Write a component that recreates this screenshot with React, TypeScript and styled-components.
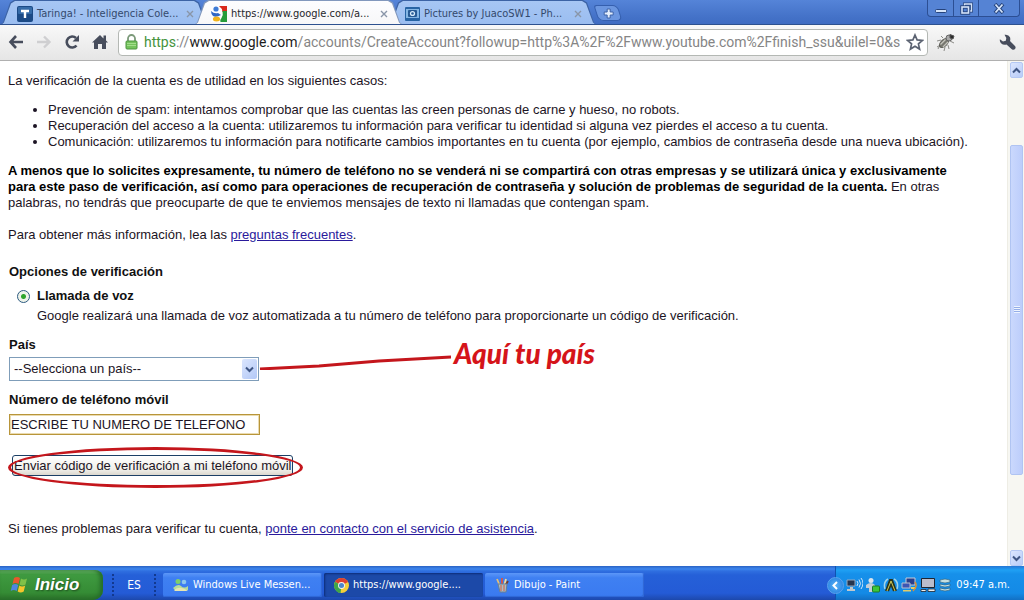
import React from 'react';
import styled, { createGlobalStyle, css } from 'styled-components';

const GlobalStyle = createGlobalStyle`
  * { box-sizing: border-box; }
  html, body { margin: 0; padding: 0; }
  body { font-family: "Liberation Sans", Arial, sans-serif; font-size: 13px; line-height: 16px; color: #1c1424; background: #fff; }
  button, input, select { font: inherit; color: inherit; margin: 0; }
`;

const uiFont = css`font-family: "DejaVu Sans Condensed", Tahoma, sans-serif;`;

const Screen = styled.div`
  display: flex;
  flex-direction: column;
  min-height: 100vh;
`;

/* ---------- Tab strip ---------- */
const TabStrip = styled.header`
  display: flex;
  justify-content: space-between;
  height: 25px;
  background: linear-gradient(#5584d8, #4472c8 70%, #3f6cc2);
  border-bottom: 1px solid #2d518f;
  overflow: hidden;
`;

const Tabs = styled.nav`
  display: flex;
  flex: 1;
  align-items: flex-start;
  min-width: 0;
`;

const Tab = styled.div<{ $active?: boolean }>`
  position: relative;
  z-index: ${p => (p.$active ? 2 : 1)};
  display: flex;
  align-items: center;
  flex: 0 1 209px;
  height: 25px;
  margin-right: -15px;
  padding: 2px 15px 0 17px;
  gap: 4px;
  ${uiFont}
  font-size: 11px;
  color: ${p => (p.$active ? '#26262a' : '#33496c')};
  &::before, &::after {
    content: "";
    position: absolute;
    z-index: -1;
    inset: 0;
    clip-path: polygon(0 100%, 3px 90%, 10px 10%, 14px 0, calc(100% - 14px) 0, calc(100% - 10px) 10%, calc(100% - 3px) 90%, 100% 100%);
    background: ${p => (p.$active ? '#8298bd' : '#3c63a5')};
  }
  &::after {
    inset: 1px 1px 0;
    background: ${p => (p.$active ? 'linear-gradient(#fdfdff, #f7f7f8)' : 'linear-gradient(#a6c6f4, #9abdf0)')};
  }
`;

const TabTitle = styled.a`
  flex: 1;
  min-width: 0;
  color: inherit;
  text-decoration: none;
  white-space: nowrap;
`;

const PlainButton = styled.button`
  display: flex;
  align-items: center;
  justify-content: center;
  padding: 0;
  border: 0;
  background: none;
`;

const NewTab = styled(PlainButton)`
  width: 24px;
  height: 16px;
  margin: 5px 0 0 14px;
  border: 1px solid #355fae;
  border-radius: 3px 5px 5px 5px;
  background: #6b96e0;
  transform: skewX(18deg);
  svg { transform: skewX(-18deg); }
`;

const WindowButtons = styled.div`
  display: flex;
  height: 17px;
  margin-right: 4px;
  border: 1px solid #2c4f94;
  border-top: 0;
  border-radius: 0 0 4px 4px;
  background: #5583d4;
`;

const WindowButton = styled(PlainButton)<{ $wide?: boolean }>`
  width: ${p => (p.$wide ? 41 : 25)}px;
  & + & { border-left: 1px solid #2c4f94; }
`;

/* ---------- Toolbar ---------- */
const Toolbar = styled.div`
  display: flex;
  align-items: center;
  height: 36px;
  padding: 0 8px 1px;
  background: linear-gradient(#f8f8f8, #e6e6e6);
  border-bottom: 1px solid #b0b0b0;
`;

const NavButtons = styled.div`
  display: flex;
  gap: 12px;
  margin-right: 10px;
`;

const NavButton = styled(PlainButton)`
  width: 16px;
  height: 16px;
`;

const AddressBar = styled.div`
  display: flex;
  align-items: center;
  flex: 1;
  min-width: 0;
  height: 27px;
  padding: 0 3px 0 6px;
  border: 1px solid #b4b8b4;
  border-radius: 4px;
  background: #fff;
`;

const Address = styled.a`
  flex: 1;
  min-width: 0;
  margin-left: 6px;
  overflow: hidden;
  white-space: nowrap;
  font-family: Roboto, Tahoma, sans-serif;
  font-size: 14px;
  line-height: 22px;
  color: #858585;
  text-decoration: none;
  span { color: #45933c; }
  b { font-weight: 400; color: #1c1c1c; }
`;

const Extensions = styled.div`
  display: flex;
  align-items: center;
  justify-content: space-between;
  width: 88px;
  padding: 0 0 0 8px;
`;

/* ---------- Page ---------- */
const Viewport = styled.div`
  display: flex;
  flex: 1;
`;

const Page = styled.main`
  flex: 1;
  min-width: 0;
  padding: 12px 32px 8px 8px;
`;

const Paragraph = styled.p`
  margin: 0 0 16px;
`;

const Cases = styled.ul`
  margin: -3px 0 13px;
  padding-left: 40px;
`;

const Strong = styled.b`
  color: #000;
`;

const Link = styled.a`
  color: #2a1a9c;
`;

const Form = styled.form`
  display: flex;
  flex-direction: column;
  align-items: flex-start;
  margin-top: 21px;
  padding-left: 1px;
`;

const Title = styled.h2`
  margin: 0 0 8px;
  font-size: 13px;
  line-height: 16px;
  color: #111;
`;

const Option = styled.div`
  display: grid;
  grid-template-columns: 12px 1fr;
  column-gap: 8px;
  row-gap: 4px;
  align-items: center;
  margin: 0 0 13px 8px;
  p { grid-column: 2; margin: 0; }
`;

const Radio = styled.input`
  appearance: none;
  width: 13px;
  height: 13px;
  border: 1px solid #2c5a80;
  border-radius: 50%;
  background: radial-gradient(circle, #2fa52c 0 2px, #eef3ea 3px);
`;

const Label = styled.label`
  font-weight: bold;
  color: #111;
`;

const SelectRow = styled.div`
  position: relative;
  width: 250px;
  margin: 4px 0 11px;
`;

const Select = styled.select`
  display: block;
  appearance: none;
  width: 100%;
  height: 24px;
  padding: 0 20px 0 4px;
  border: 1px solid #7f9db9;
  border-radius: 0;
  background: #fff;
`;

const SelectArrow = styled.span`
  position: absolute;
  top: 2px;
  right: 2px;
  bottom: 2px;
  width: 15px;
  display: flex;
  align-items: center;
  justify-content: center;
  border-radius: 2px;
  background: linear-gradient(135deg, #dbe6fe, #b3c8f6);
  pointer-events: none;
`;

const Note = styled.div`
  position: absolute;
  left: 100%;
  bottom: 11px;
  display: flex;
  align-items: flex-end;
  gap: 2px;
  font: italic 900 28px/34px Lato, sans-serif;
  color: #d5141a;
  white-space: nowrap;
  pointer-events: none;
`;

const Field = styled.input`
  width: 251px;
  height: 21px;
  margin: 6px 0 20px;
  padding: 0 1px;
  border: 1px solid #b8953a;
  outline: 0;
  box-shadow: inset 0 0 0 1px #eadbb0;
`;

const SubmitRow = styled.div`
  position: relative;
  margin: 0 0 45px 3px;
`;

const Submit = styled.button`
  display: block;
  height: 21px;
  padding: 0 1px;
  border: 1px solid #1c3f66;
  border-radius: 3px;
  background: linear-gradient(#fff, #f0efea 70%, #dcd8cf);
  white-space: nowrap;
`;

const Ring = styled.span`
  position: absolute;
  inset: -8px -10px -12px -4px;
  border: 3px solid #c4161c;
  border-radius: 50%;
  pointer-events: none;
`;

/* ---------- Scroll bar ---------- */
const ScrollBar = styled.div`
  display: flex;
  flex-direction: column;
  width: 17px;
  padding: 1px 1px 0 2px;
  border-left: 1px solid #eeede5;
  background: #f7f7f2;
`;

const ScrollButton = styled(PlainButton)`
  height: 16px;
  border: 1px solid #b4c8f4;
  border-radius: 2px;
  background: linear-gradient(135deg, #dbe6fe, #b8ccf8);
`;

const Track = styled.div`
  display: grid;
  flex: 1;
  grid-template-rows: 67fr 329fr 75fr;
`;

const Thumb = styled.div`
  grid-row: 2;
  display: flex;
  align-items: center;
  justify-content: center;
  border: 1px solid #b0c4f2;
  border-radius: 2px;
  background: linear-gradient(90deg, #cad8fd, #bccdfb);
`;

/* ---------- Task bar ---------- */
const TaskBar = styled.footer`
  display: flex;
  height: 34px;
  ${uiFont}
  font-size: 11px;
  color: #fff;
  background: linear-gradient(#2a62c4 0, #3d86ee 3px, #2f6fe0 5px, #2560d8 9px, #245bd6 80%, #1d48ac);
`;

const Start = styled.button`
  display: flex;
  align-items: center;
  gap: 5px;
  width: 103px;
  margin-top: 4px;
  padding: 0 0 0 10px;
  border: 0;
  border-radius: 0 8px 10px 0;
  background: linear-gradient(#6cb56a, #3f9a40 15%, #358c35 75%, #2a7029);
  box-shadow: inset -3px 0 4px #256c28;
  font: italic bold 17px/20px "Liberation Sans", Arial, sans-serif;
  color: #fff;
  text-shadow: 1px 1px 2px #1d4a1d;
`;

const Language = styled.div`
  display: flex;
  align-items: center;
  justify-content: center;
  width: 44px;
  margin: 8px 0 4px 9px;
  border: dotted #12398f;
  border-width: 0 2px;
  font-size: 12px;
`;

const Tasks = styled.div`
  display: flex;
  flex: 1;
  gap: 2px;
  padding: 7px 0 3px 7px;
  min-width: 0;
`;

const Task = styled.button<{ $active?: boolean }>`
  display: flex;
  align-items: center;
  gap: 4px;
  flex: 0 1 159px;
  min-width: 0;
  padding: 0 10px;
  border: 0;
  border-radius: 2px;
  white-space: nowrap;
  color: #fff;
  background: ${p => (p.$active ? '#1c49a8' : 'linear-gradient(#5c97f8, #3f80f2 20%, #3a7af0)')};
  box-shadow: ${p => (p.$active ? 'inset 1px 1px 2px #0d2c78' : 'inset -1px -1px 1px #2f66d4')};
`;

const Tray = styled.div`
  display: flex;
  align-items: center;
  gap: 2px;
  width: 189px;
  padding: 4px 14px 0 0;
  border-left: 1px solid #0f52b0;
  background: linear-gradient(#2577d6 0, #1fa0f4 4px, #1690ea 8px, #148ae6 80%, #1270c4);
  time { margin-left: auto; }
`;

const Expand = styled(PlainButton)`
  flex: none;
  width: 17px;
  height: 17px;
  margin-left: -9px;
  border-radius: 50%;
  background: radial-gradient(#58b4f8, #2078dc);
  border: 1px solid #5aa4ee;
`;

const Chevron = ({ d, color = '#3f5684' }: { d: string; color?: string }) => (
  <svg width="9" height="9" viewBox="0 0 9 9" fill="none" stroke={color} strokeWidth="2"><path d={d} /></svg>
);
const DOWN = 'M1 2.5 4.5 6 8 2.5';
const UP = 'M1 6.5 4.5 3 8 6.5';
const LEFT = 'M6 1 2.5 4.5 6 8';

const CloseX = () => (
  <svg width="8" height="8" viewBox="0 0 8 8" stroke="#8995a8" strokeWidth="1.4"><path d="M1 1l6 6M7 1L1 7" /></svg>
);

const TaringaIcon = () => (
  <svg width="16" height="16" viewBox="0 0 16 16">
    <rect width="16" height="16" rx="2" fill="#1b4a86" /><rect x="1" y="1" width="14" height="7" rx="1" fill="#356ba8" />
    <path d="M4 5h8M8 5v7" stroke="#fff" strokeWidth="2.4" />
  </svg>
);
const GoogleIcon = () => (
  <svg width="16" height="16" viewBox="0 0 16 16">
    <rect width="16" height="16" fill="#fdfdfd" />
    <path d="M8 0h8v6h-4.500Q11 2 8 0z" fill="#d9281c" /><path d="M11.500 5H16v11H9.500q-1-2 1-4 2-3 1-7z" fill="#259b3a" />
    <path d="M0 5q3 3 7 2l3 2q-5 3-8 1-2-2-2-5z" fill="#2f66c4" /><circle cx="5" cy="3" r="2.6" fill="#3f7bd6" />
    <ellipse cx="5.500" cy="13" rx="3.600" ry="2.500" fill="#f0b31c" />
  </svg>
);
const PhotoIcon = () => (
  <svg width="15" height="14" viewBox="0 0 15 14">
    <rect width="15" height="14" rx="1" fill="#2764a4" /><rect x="1" y="2" width="13" height="9" fill="#84b6e4" />
    <rect x="3" y="3" width="9" height="7" rx="1" fill="#265a94" /><circle cx="7.5" cy="6.5" r="2.6" fill="#d7ebfa" /><circle cx="7.5" cy="6.5" r="1.3" fill="#2b5f98" />
  </svg>
);
const LockIcon = () => (
  <svg width="13" height="16" viewBox="0 0 13 16">
    <path d="M3 8V4.5a3.5 3.5 0 0 1 7 0V8" fill="none" stroke="#7c9a7a" strokeWidth="1.8" />
    <rect x="1" y="7" width="11" height="8" rx="1" fill="#74c35c" stroke="#4d9540" /><path d="M2 9.500h9M2 11.500h9" stroke="#a3dd8c" />
  </svg>
);
const BugIcon = () => (
  <svg width="20" height="20" viewBox="0 0 20 20" fill="none" stroke="#8a8a86" strokeWidth="1">
    <path d="M5 8 1 9M7 6 5 4M12 13l1 4M9 15l-1 4M6 12l-5 3M14 9l4 2M4 13l-2 4" />
    <ellipse cx="8" cy="11" rx="5.500" ry="3.200" transform="rotate(-45 8 11)" fill="#77776f" stroke="#55554f" />
    <path d="M4.500 12.500l5-5M7 15l5-5" stroke="#c4c4bc" strokeWidth="1.300" /><circle cx="13" cy="6" r="3" fill="#aaa" stroke="#666" />
    <path d="M14 2.500l4 1.500-1 3-3-1z" fill="#2c2c2c" stroke="#555" />
  </svg>
);
const WrenchIcon = () => (
  <svg width="17" height="17" viewBox="0 0 17 17">
    <path d="M5.500.8q4-.8 5.500 2.500.6 1.800 0 3.700l5 5q1.200 1.500 0 3t-3.200.2L7.500 10.500Q4.500 11.500 2 9.300.4 7.500.9 5.200L4 7.600l2.800-.8.500-2.900z" fill="#474d5c" />
  </svg>
);
const FlagIcon = () => (
  <svg width="20" height="18" viewBox="0 0 20 18">
    <path d="M4 2q3-2 6 0L8.500 8q-3-2-6 0z" fill="#e8582c" /><path d="M11 2.500q3 2 6 0L15.500 8.500q-3 2-6 0z" fill="#7fc148" />
    <path d="M2.200 9q3-2 6 0L6.700 15q-3-2-6 0z" fill="#4e86e0" /><path d="M9.200 9.500q3 2 6 0l-1.500 6q-3 2-6 0z" fill="#f6c52c" />
  </svg>
);
const MessengerIcon = () => (
  <svg width="16" height="15" viewBox="0 0 16 15">
    <circle cx="5" cy="3.500" r="2.500" fill="#7fcf6a" /><circle cx="11" cy="4" r="2.300" fill="#8fc8ec" />
    <path d="M0 10q5-5 8-2t7 0v4H2z" fill="#b6dc9a" /><path d="M1 12q6-5 14 1H2z" fill="#e8e6b0" />
  </svg>
);
const ChromeIcon = () => (
  <svg width="15" height="15" viewBox="0 0 16 16">
    <circle cx="8" cy="8" r="8" fill="#f3cf3a" /><path d="M8 8 1.100 4A8 8 0 0 1 15 4.200z" fill="#dc4030" />
    <path d="M8 8 1.100 4A8 8 0 0 0 7 16z" fill="#3ea64a" /><circle cx="8" cy="8" r="3.700" fill="#f6f6f2" /><circle cx="8" cy="8" r="2.700" fill="#4a86cc" />
  </svg>
);
const PaintIcon = () => (
  <svg width="15" height="16" viewBox="0 0 15 16" strokeWidth="1.800">
    <path d="M5 9 2 2" stroke="#e3c078" /><path d="M7 9V1" stroke="#dc5540" /><path d="m9 9 2-7" stroke="#f0dfa0" /><path d="m10 9 3-5" stroke="#7a3e2a" />
    <path d="M3 7h9l-1 8H5z" fill="#a9bcc6" stroke="#6d7f90" strokeWidth="1" /><path d="M6 8v6M9 8v6" stroke="#d85c3c" strokeWidth="1" />
  </svg>
);
const TrayIcons = () => (
  <>
    <svg width="17" height="16" viewBox="0 0 17 16">
      <path d="M1 3h8v6H1z" fill="#26354e" stroke="#93a8c0" /><path d="M4 10h3v2h2v2H1v-2h3z" fill="#c0c8cc" />
      <path d="M11 4q2 2 0 5M13 2.500q3 4 0 8M15 1q4 5 0 11" fill="none" stroke="#cfe6fa" />
    </svg>
    <svg width="16" height="16" viewBox="0 0 16 16">
      <circle cx="6" cy="3.500" r="2.500" fill="#dce4ea" /><path d="M1 8q5-4 9 0v3H8v4H4v-4H1z" fill="#c2ced8" /><rect x="7.500" y="9" width="7" height="6" rx="1" fill="#3cc63a" stroke="#1c7a28" />
    </svg>
    <svg width="16" height="16" viewBox="0 0 16 16" fill="none">
      <path d="M2 12Q0 5 5 2M14 12q2-7-3-10" stroke="#9fd4e8" strokeWidth="1.500" /><path d="m3 14 4-11h2l4 11M5 14l3-7 3 7" stroke="#28351e" strokeWidth="2" /><path d="m4 14 4-10 4 10" stroke="#d6c344" />
    </svg>
    <svg width="17" height="16" viewBox="0 0 17 16">
      <path d="M5 1h9v7H5z" fill="#2a3f8c" stroke="#c5cbd8" /><path d="M1 6h8v5H1z" fill="#3c55b4" stroke="#b9c0d0" /><path d="M2 13h8v1.500H2zM10 10h5v2h-5z" fill="#e0cc6a" /><path d="M14 5q3 4-2 9" stroke="#d89038" fill="none" strokeWidth="1.500" />
    </svg>
    <svg width="16" height="16" viewBox="0 0 16 16">
      <path d="M1.500 1.500h13v9h-13z" fill="#b9bccb" stroke="#1d2430" /><path d="M1 12.500h5v2H1zM8 12h7v2.500H8z" fill="#eee" stroke="#1d2430" strokeWidth=".8" />
    </svg>
    <svg width="15" height="14" viewBox="0 0 15 14">
      <path d="M2 2q5-2 10 0v2Q7 6 2 4zM2 6q5 2 10 0v2q-5 2-10 0zM2 10q5 2 10 0v2q-5 2-10 0z" fill="#c5dfe0" stroke="#2e6684" strokeWidth=".7" />
    </svg>
  </>
);

const tabs = [
  { title: 'Taringa! - Inteligencia Cole...', icon: <TaringaIcon /> },
  { title: 'https://www.google.com/a...', icon: <GoogleIcon />, active: true },
  { title: 'Pictures by JuacoSW1 - Ph...', icon: <PhotoIcon /> },
];

const tasks = [
  { title: 'Windows Live Messen...', icon: <MessengerIcon /> },
  { title: 'https://www.google....', icon: <ChromeIcon />, active: true },
  { title: 'Dibujo - Paint', icon: <PaintIcon /> },
];

export default function App() {
  return (
    <Screen>
      <GlobalStyle />
      <TabStrip>
        <Tabs>
          {tabs.map(t => (
            <Tab key={t.title} $active={t.active}>
              {t.icon}
              <TabTitle href="#">{t.title}</TabTitle>
              <PlainButton aria-label="Cerrar"><CloseX /></PlainButton>
            </Tab>
          ))}
          <NewTab aria-label="Nueva pestaña">
            <svg width="11" height="11" viewBox="0 0 11 11"><path d="M4 1h3v3h3v3H7v3H4V7H1V4h3z" fill="#e4eefc" stroke="#3c62a8" /></svg>
          </NewTab>
        </Tabs>
        <WindowButtons>
          <WindowButton aria-label="Minimizar">
            <svg width="12" height="12" viewBox="0 0 12 12"><rect x=".5" y="7.500" width="11" height="3" rx="1" fill="#d5e4fa" stroke="#25437c" /></svg>
          </WindowButton>
          <WindowButton aria-label="Restaurar">
            <svg width="13" height="13" viewBox="0 0 13 13" fill="none">
              <path d="M4.500 4V2h7v7h-2" stroke="#25437c" strokeWidth="3" /><path d="M4.500 4V2h7v7h-2" stroke="#d5e4fa" strokeWidth="1.400" />
              <rect x="2" y="5" width="6.500" height="6" stroke="#25437c" strokeWidth="3.400" /><rect x="2" y="5" width="6.500" height="6" stroke="#d5e4fa" strokeWidth="1.600" />
            </svg>
          </WindowButton>
          <WindowButton $wide aria-label="Cerrar ventana">
            <svg width="12" height="11" viewBox="0 0 12 11"><path d="m2 1 8 9M10 1 2 10" stroke="#25437c" strokeWidth="3.600" /><path d="m2.500 1.500 7 8M9.500 1.500l-7 8" stroke="#d5e4fa" strokeWidth="1.800" /></svg>
          </WindowButton>
        </WindowButtons>
      </TabStrip>

      <Toolbar>
        <NavButtons>
          <NavButton aria-label="Atrás">
            <svg width="16" height="16" viewBox="0 0 16 16" fill="none" stroke="#474d5c" strokeWidth="2.600"><path d="M15 8H3M8 2 2.500 8 8 14" /></svg>
          </NavButton>
          <NavButton aria-label="Adelante">
            <svg width="16" height="16" viewBox="0 0 16 16" fill="none" stroke="#cfcfd1" strokeWidth="2.400"><path d="M1 8h12M8 2.500 13.500 8 8 13.500" /></svg>
          </NavButton>
          <NavButton aria-label="Volver a cargar">
            <svg width="16" height="16" viewBox="0 0 16 16"><path d="M12.500 11.500A5.500 5.500 0 1 1 12 4" fill="none" stroke="#474d5c" strokeWidth="2.600" /><path d="M15 1v6.500H8.500z" fill="#474d5c" /></svg>
          </NavButton>
          <NavButton aria-label="Página principal">
            <svg width="16" height="16" viewBox="0 0 16 16" fill="#474d5c"><path d="M8 1 0 8.500h2V15h4v-5h4v5h4V8.500h2L14 6.500V1.500h-2.500v3z" /></svg>
          </NavButton>
        </NavButtons>
        <AddressBar>
          <LockIcon />
          <Address href="#"><span>https</span>://<b>www.google.com</b>/accounts/CreateAccount?followup=http%3A%2F%2Fwww.youtube.com%2Ffinish_ssu&amp;uilel=0&amp;s</Address>
          <PlainButton aria-label="Añadir a marcadores">
            <svg width="18" height="18" viewBox="0 0 18 18"><path d="m9 2 2.100 4.900 5.300.5-4 3.500 1.200 5.200L9 13.300l-4.600 2.800 1.200-5.200-4-3.500 5.300-.5z" fill="#fff" stroke="#5c6372" strokeWidth="1.700" /></svg>
          </PlainButton>
        </AddressBar>
        <Extensions>
          <PlainButton aria-label="Extensión"><BugIcon /></PlainButton>
          <PlainButton aria-label="Personalizar"><WrenchIcon /></PlainButton>
        </Extensions>
      </Toolbar>

      <Viewport>
        <Page>
          <Paragraph>La verificación de la cuenta es de utilidad en los siguientes casos:</Paragraph>
          <Cases>
            <li>Prevención de spam: intentamos comprobar que las cuentas las creen personas de carne y hueso, no robots.</li>
            <li>Recuperación del acceso a la cuenta: utilizaremos tu información para verificar tu identidad si alguna vez pierdes el acceso a tu cuenta.</li>
            <li>Comunicación: utilizaremos tu información para notificarte cambios importantes en tu cuenta (por ejemplo, cambios de contraseña desde una nueva ubicación).</li>
          </Cases>
          <Paragraph>
            <Strong>A menos que lo solicites expresamente, tu número de teléfono no se venderá ni se compartirá con otras empresas y se utilizará única y exclusivamente para este paso de verificación, así como para operaciones de recuperación de contraseña y solución de problemas de seguridad de la cuenta.</Strong>{' '}
            En otras palabras, no tendrás que preocuparte de que te enviemos mensajes de texto ni llamadas que contengan spam.
          </Paragraph>
          <Paragraph>Para obtener más información, lea las <Link href="#">preguntas frecuentes</Link>.</Paragraph>

          <Form onSubmit={e => e.preventDefault()}>
            <Title>Opciones de verificación</Title>
            <Option>
              <Radio type="radio" id="voz" name="modo" defaultChecked />
              <Label htmlFor="voz">Llamada de voz</Label>
              <p>Google realizará una llamada de voz automatizada a tu número de teléfono para proporcionarte un código de verificación.</p>
            </Option>
            <Label htmlFor="pais">País</Label>
            <SelectRow>
              <Select id="pais"><option>--Selecciona un país--</option></Select>
              <SelectArrow><Chevron d={DOWN} /></SelectArrow>
              <Note>
                <svg width="193" height="30" viewBox="0 0 193 30"><path d="M1 29 60 26 120 21 192 17" fill="none" stroke="#c4161c" strokeWidth="3" /></svg>
                Aquí tu país
              </Note>
            </SelectRow>
            <Label htmlFor="telefono">Número de teléfono móvil</Label>
            <Field id="telefono" type="text" defaultValue="ESCRIBE TU NUMERO DE TELEFONO" />
            <SubmitRow>
              <Submit type="submit">Enviar código de verificación a mi teléfono móvil</Submit>
              <Ring />
            </SubmitRow>
          </Form>
          <Paragraph>Si tienes problemas para verificar tu cuenta, <Link href="#">ponte en contacto con el servicio de asistencia</Link>.</Paragraph>
        </Page>
        <ScrollBar>
          <ScrollButton aria-label="Subir"><Chevron d={UP} /></ScrollButton>
          <Track>
            <Thumb><svg width="6" height="8" viewBox="0 0 6 8"><path d="M0 .5h6M0 2.500h6M0 4.500h6M0 6.500h6" stroke="#eef4fe" /><path d="M0 1.500h6M0 3.500h6M0 5.500h6" stroke="#95aee8" /></svg></Thumb>
          </Track>
          <ScrollButton aria-label="Bajar"><Chevron d={DOWN} /></ScrollButton>
        </ScrollBar>
      </Viewport>

      <TaskBar>
        <Start><FlagIcon />Inicio</Start>
        <Language>ES</Language>
        <Tasks>
          {tasks.map(t => (
            <Task key={t.title} $active={t.active}>{t.icon}{t.title}</Task>
          ))}
        </Tasks>
        <Tray>
          <Expand aria-label="Mostrar iconos ocultos"><Chevron d={LEFT} color="#fff" /></Expand>
          <TrayIcons />
          <time>09:47 a.m.</time>
        </Tray>
      </TaskBar>
    </Screen>
  );
}
